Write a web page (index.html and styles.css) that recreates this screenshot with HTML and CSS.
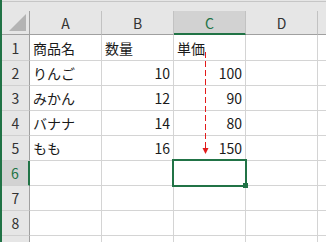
FILE: index.html
```html
<!DOCTYPE html>
<html lang="ja">
<head>
<meta charset="utf-8">
<link rel="stylesheet" href="styles.css">
</head>
<body>
<div class="sheet">
  <div class="topbar"></div>
  <div class="grid">
    <div class="corner"><span class="tri"></span></div>
    <div class="ch">A</div>
    <div class="ch">B</div>
    <div class="ch sel">C</div>
    <div class="ch">D</div>
    <div class="ch edge"></div>

    <div class="rh first">1</div>
    <div class="c first">商品名</div>
    <div class="c first">数量</div>
    <div class="c first">単価</div>
    <div class="c first"></div>
    <div class="c first edge"></div>

    <div class="rh">2</div>
    <div class="c">りんご</div>
    <div class="c num">10</div>
    <div class="c num">100</div>
    <div class="c"></div>
    <div class="c edge"></div>

    <div class="rh">3</div>
    <div class="c">みかん</div>
    <div class="c num">12</div>
    <div class="c num">90</div>
    <div class="c"></div>
    <div class="c edge"></div>

    <div class="rh">4</div>
    <div class="c">バナナ</div>
    <div class="c num">14</div>
    <div class="c num">80</div>
    <div class="c"></div>
    <div class="c edge"></div>

    <div class="rh">5</div>
    <div class="c">もも</div>
    <div class="c num">16</div>
    <div class="c num">150</div>
    <div class="c"></div>
    <div class="c edge"></div>

    <div class="rh sel">6</div>
    <div class="c"></div>
    <div class="c"></div>
    <div class="c"></div>
    <div class="c"></div>
    <div class="c edge"></div>

    <div class="rh">7</div>
    <div class="c"></div>
    <div class="c"></div>
    <div class="c"></div>
    <div class="c"></div>
    <div class="c edge"></div>

    <div class="rh">8</div>
    <div class="c"></div>
    <div class="c"></div>
    <div class="c"></div>
    <div class="c"></div>
    <div class="c edge"></div>

    <div class="rh"></div>
    <div class="c"></div>
    <div class="c"></div>
    <div class="c"></div>
    <div class="c"></div>
    <div class="c edge"></div>
  </div>

  <svg class="arrow" width="12" height="110" viewBox="0 0 12 110">
    <line x1="6.5" y1="0" x2="6.5" y2="96" stroke="#e21b1b" stroke-width="1" stroke-dasharray="6 3"/>
    <polygon points="3.5,96 9.5,96 6.5,102" fill="#e21b1b"/>
  </svg>
  <div class="selection"></div>
  <div class="handle"></div>
</div>
</body>
</html>
```

FILE: styles.css
```css
* { box-sizing: border-box; }
html, body {
  margin: 0;
  padding: 0;
  background: #ffffff;
}
body {
  width: 326px;
  height: 242px;
  overflow: hidden;
  font-family: "Noto Sans CJK JP", "Noto Sans", sans-serif;
}
.sheet {
  position: relative;
  width: 326px;
  height: 242px;
  overflow: hidden;
  border-left: 2px solid #217346;
}
.topbar {
  height: 11px;
  background: #e6e6e6;
  border-top: 1px solid #e6e6e6;
  box-shadow: inset 0 1px 0 #c6c6c6;
}
.grid {
  display: grid;
  grid-template-columns: 28px 72px 72px 72px 72px 20px;
  grid-template-rows: 24px 26px repeat(8, 25px);
}
.corner {
  background: #e6e6e6;
  border-right: 1px solid #a0a0a0;
  border-bottom: 1px solid #a0a0a0;
  position: relative;
}
.tri {
  position: absolute;
  left: 7px;
  top: 3px;
  width: 0;
  height: 0;
  border-left: 17px solid transparent;
  border-bottom: 17px solid #b4b4b4;
}
.ch {
  background: #e6e6e6;
  border-right: 1px solid #c2c2c2;
  border-bottom: 1px solid #a0a0a0;
  display: flex;
  align-items: center;
  justify-content: center;
  font-size: 14px;
  color: #333333;
  padding-top: 1px;
}
.ch.sel {
  background: #d2d2d2;
  color: #217346;
  border-bottom: 2px solid #217346;
  padding-top: 2px;
}
.rh {
  background: #e6e6e6;
  border-right: 1px solid #a0a0a0;
  border-bottom: 1px solid #d0d0d0;
  display: flex;
  align-items: center;
  justify-content: center;
  font-size: 14px;
  color: #333333;
}
.rh.sel {
  background: #d2d2d2;
  color: #217346;
  border-right: 2px solid #217346;
}
.c {
  border-right: 1px solid #d4d4d4;
  border-bottom: 1px solid #d4d4d4;
  display: flex;
  align-items: center;
  padding: 0 3px 0 3px;
  font-size: 14px;
  color: #1a1a1a;
  white-space: nowrap;
}
.c.num {
  justify-content: flex-end;
  padding-right: 3px;
}
.arrow {
  position: absolute;
  left: 197px;
  top: 52px;
}
.selection {
  position: absolute;
  left: 170px;
  top: 159px;
  width: 75px;
  height: 28px;
  border: 2px solid #217346;
}
.handle {
  position: absolute;
  left: 241px;
  top: 183px;
  width: 5px;
  height: 5px;
  background: #217346;
}
```
